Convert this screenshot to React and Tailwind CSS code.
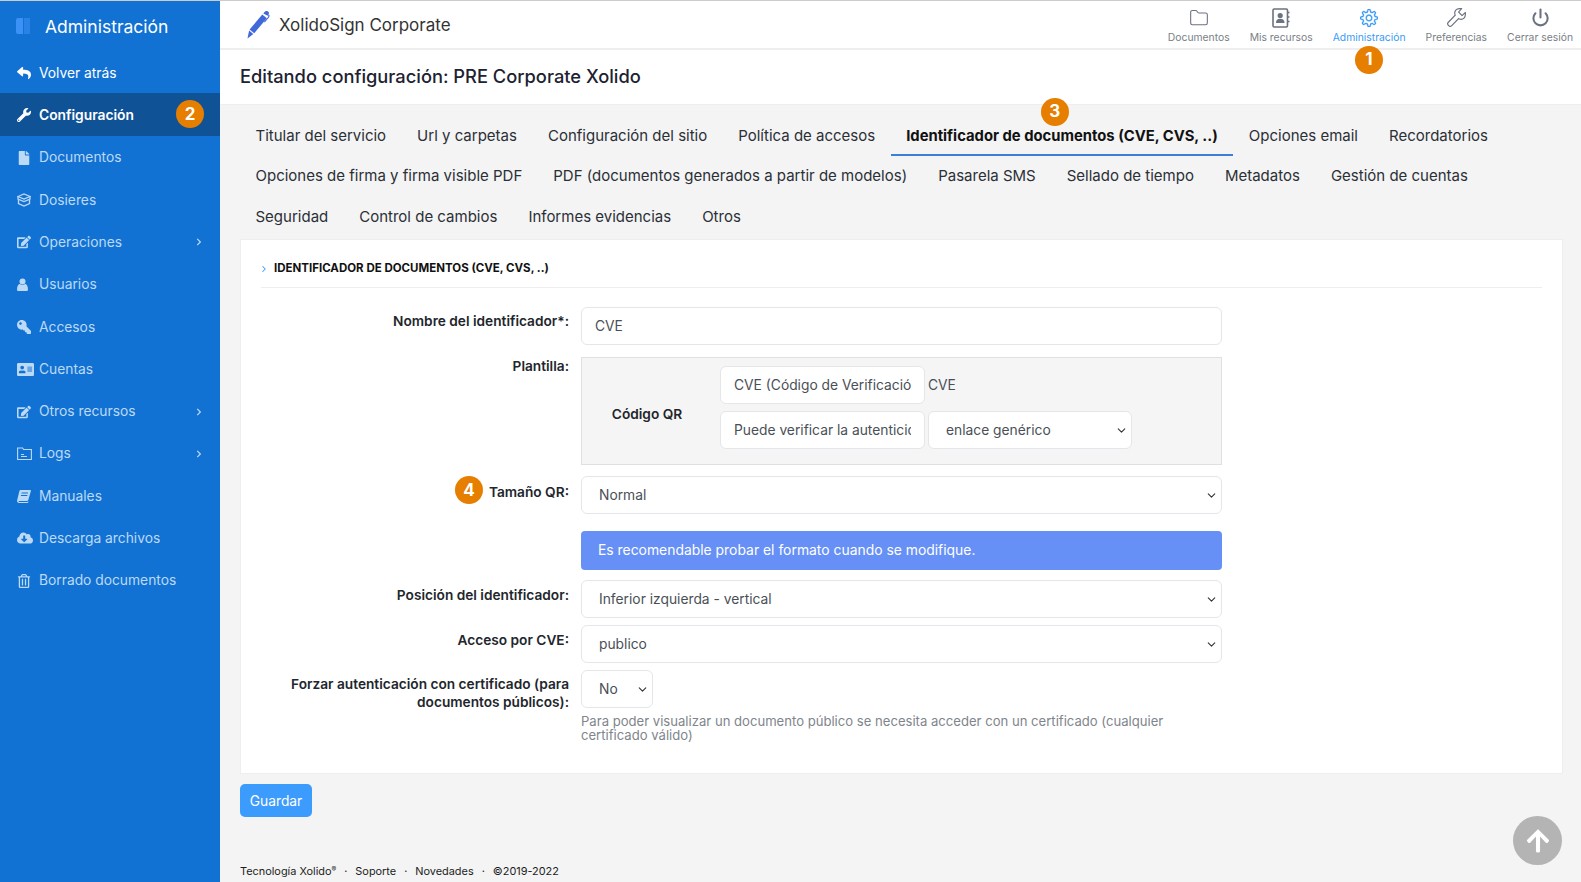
import React from "react";
import { FaReply, FaWrench, FaFile, FaEdit, FaKey, FaAddressCard, FaCloudDownloadAlt, FaRegTrashAlt, FaChevronRight, FaArrowUp } from "react-icons/fa";
import { SlSettings, SlWrench } from "react-icons/sl";
import { ChevronDown, Folder, ChevronRight, Power } from "lucide-react";

const font = { fontFamily: "Inter, 'Open Sans', sans-serif" };

const DosierIcon = () => (
  <svg width="14" height="14" viewBox="0 0 14 14" fill="none" stroke="currentColor" strokeWidth="1.3">
    <path d="M1 3.5 L7 1 L13 3.5 L7 6 Z" />
    <path d="M1 3.5 V6 L7 8.5 L13 6 V3.5" />
    <path d="M1.5 6.5 V10.5 L7 13 L12.5 10.5 V6.5" />
  </svg>
);
const LogsIcon = () => (
  <svg width="15" height="13" viewBox="0 0 15 13" fill="none" stroke="currentColor" strokeWidth="1.1">
    <path d="M.6 1h5l1 1.5h7.8v10H.6Z" />
    <path d="M4 7.500h3M4 9.500h6" />
  </svg>
);
const UserIcon = () => (
  <svg width="11" height="13" viewBox="0 0 11 13" fill="currentColor">
    <circle cx="5.500" cy="3.400" r="3" />
    <path d="M0 11.500C0 8 1.300 6 3 6c.7.600 1.500 1 2.500 1S7.300 6.600 8 6c1.700 0 3 2 3 5.500 0 1-.7 1.500-1.500 1.500h-8C.7 13 0 12.500 0 11.500Z" />
  </svg>
);
const BookIcon = () => (
  <svg width="14" height="13" viewBox="0 0 14 13" fill="currentColor">
    <path d="M3.500 0H13.300c.5 0 .8.400.6.900l-2.600 9c-.2.700-.7 1.100-1.400 1.100H2.200c-.5 0-.8.600-.6 1H10c.6 0 1-.2 1.200-.8l.2.800c-.2.700-.8 1-1.400 1H1.800C.6 13-.2 11.800.1 10.600L2.400.9C2.500.4 3 0 3.500 0Zm1.200 2.500-.3 1h6.400l.3-1Zm-.6 2.500-.3 1h6.400l.3-1Z" />
  </svg>
);
const ContactsIcon = () => (
  <svg width="18" height="20" viewBox="0 0 18 20" fill="none" stroke="#6b7280" strokeWidth="1.6">
    <rect x="1" y="1" width="14.500" height="18" rx="1.200" />
    <path d="M16 4.500h1.500M16 9h1.500M16 13.500h1.500" />
    <circle cx="8.200" cy="7.500" r="2.600" fill="#6b7280" stroke="none" />
    <path d="M4 15c0-3 1.500-4.200 4.200-4.200S12.500 12 12.500 15Z" fill="#6b7280" stroke="none" />
  </svg>
);
const PenIcon = () => (
  <svg width="24" height="28" viewBox="0 0 24 28" fill="#3f68d8">
    <path d="M16.300 3.600 20.800 7.300 8.200 22.300 3.600 18.500Z" />
    <path d="M3.100 19.400 7.300 23 1.500 27.500Z" />
    <path d="M17.300 2.500 18.800.8c.9-1 2.300-1.100 3.300-.3s1.200 2.300.3 3.300L21.800 4.700Z" />
    <path d="M23 3.500c.8.900.8 1.800.1 2.800l-4.300 5.200-.8-.7 4.200-5c.3-.5.300-1-.1-1.500Z" />
  </svg>
);

const side = [
  [<FaReply />, "Volver atrás", false, "white"],
  [<FaWrench />, "Configuración", false, "active"],
  [<FaFile />, "Documentos"],
  [<DosierIcon />, "Dosieres"],
  [<FaEdit />, "Operaciones", true],
  [<UserIcon />, "Usuarios"],
  [<FaKey className="-scale-x-100" />, "Accesos"],
  [<FaAddressCard className="text-[17px]" />, "Cuentas"],
  [<FaEdit />, "Otros recursos", true],
  [<LogsIcon />, "Logs", true],
  [<BookIcon />, "Manuales"],
  [<FaCloudDownloadAlt className="text-[16px]" />, "Descarga archivos"],
  [<FaRegTrashAlt />, "Borrado documentos"],
];

const Badge = ({ n, className }) => (
  <span className={"absolute flex h-[28px] w-[28px] items-center justify-center rounded-full bg-[#e67e00] text-[17px] font-bold text-white " + className}>{n}</span>
);

function Sidebar() {
  return (
    <aside className="relative flex w-[220px] shrink-0 flex-col bg-[#1272d3]">
      <div className="flex h-[50px] items-center pl-[16px] pt-[3px]">
        <span className="mb-[3px] mr-[15px] flex h-[16px] w-[14px] gap-[1px]">
          <span className="w-[7px] rounded-l-[2px] bg-[#3b92f4]" />
          <span className="w-[6px] bg-[#2a82e4]" />
        </span>
        <span className="text-[17.500px] text-white">Administración</span>
      </div>
      <nav className="flex flex-col">
        {side.map(([icon, label, chev, kind]) => (
          <div
            key={label}
            className={
              "relative flex h-[42.300px] items-center pl-[17px] pr-[17px] pt-[2px] text-[13.800px] " +
              (kind === "active" ? "bg-[#0f5296] font-semibold text-white" : kind === "white" ? "text-white" : "text-[#bcd9f6]")
            }
          >
            <span className="flex w-[22px] shrink-0 items-center text-[14px]">{icon}</span>
            <span>{label}</span>
            {chev && <FaChevronRight className="ml-auto text-[8px]" />}
            {kind === "active" && <Badge n="2" className="left-[176px] top-[7px]" />}
          </div>
        ))}
      </nav>
    </aside>
  );
}

const topNav = [
  [<Folder size={20} strokeWidth={1.300} color="#6b7280" />, "Documentos"],
  [<ContactsIcon />, "Mis recursos"],
  [<SlSettings size={18} color="#3b9bf5" className="stroke-[12px]" />, "Administración", true],
  [<SlWrench size={19} color="#6b7280" />, "Preferencias"],
  [<Power size={19} strokeWidth={2.600} color="#6b7280" />, "Cerrar sesión"],
];

function TopBar() {
  return (
    <header className="relative flex h-[49px] items-center border-b-2 border-[#eeeeee] bg-white pl-[26px]">
      <PenIcon />
      <span className="ml-[9px] pt-[2px] text-[17px] text-[#333333]">XolidoSign Corporate</span>
      <div className="ml-auto flex items-center gap-[20px] pr-[8px]">
        {topNav.map(([icon, label, act]) => (
          <div key={label} className="flex flex-col items-center">
            <span className="flex h-[22px] items-center">{icon}</span>
            <span className={"mt-[2px] text-[10.350px] leading-[12px] " + (act ? "text-[#3b9bf5]" : "text-[#7a7f87]")}>{label}</span>
          </div>
        ))}
      </div>
      <Badge n="1" className="left-[1135px] top-[45px] z-10" />
    </header>
  );
}

const tabs = [
  ["Titular del servicio", "Url y carpetas", "Configuración del sitio", "Política de accesos", "Identificador de documentos (CVE, CVS, ..)", "Opciones email", "Recordatorios"],
  ["Opciones de firma y firma visible PDF", "PDF (documentos generados a partir de modelos)", "Pasarela SMS", "Sellado de tiempo", "Metadatos", "Gestión de cuentas"],
  ["Seguridad", "Control de cambios", "Informes evidencias", "Otros"],
];

function Tabs() {
  return (
    <div className="relative flex flex-col">
      {tabs.map((row, i) => (
        <div key={i} className="flex h-[40.700px]">
          {row.map((t) => {
            const active = t.startsWith("Identificador");
            return (
              <div
                key={t}
                className={
                  "flex h-[41px] items-center px-[15.500px] pt-[1px] text-[#2b2f36] " +
                  (active ? "relative border-b-2 border-[#3f7fd8] pt-[3px] text-[14.800px] font-bold text-[#111111]" : "text-[15px]")
                }
              >
                {t}
                {active && <Badge n="3" className="left-[150px] top-[-17px]" />}
              </div>
            );
          })}
        </div>
      ))}
    </div>
  );
}

const ctl = "h-[38px] rounded-[6px] border border-[#e3e6ea] bg-white text-[13.800px] text-[#4a4f57]";

const Select = ({ value, className = "" }) => (
  <div className={ctl + " flex items-center pl-[17px] pr-[3px] " + className}>
    <span>{value}</span>
    <ChevronDown size={13} strokeWidth={2} className="ml-auto text-[#333333]" />
  </div>
);

const Input = ({ value, className = "" }) => (
  <input readOnly value={value} className={ctl + " px-[13px] outline-none " + className} />
);

const Row = ({ label, children, className = "", top = "pt-[6px]", badge }) => (
  <div className={"flex " + className}>
    <div className={"relative w-[308px] shrink-0 text-right text-[13.700px] font-semibold leading-[18px] text-[#22262c] " + top}>
      {label}
      {badge}
    </div>
    <div className="ml-[12px] w-[641px]">{children}</div>
  </div>
);

function Form() {
  return (
    <section className="mt-[2px] h-[535px] border border-[#eeeeee] bg-white px-[20px]">
      <div className="flex h-[48px] items-center border-b border-[#eeeeee] pt-[11px] text-[11.500px] font-bold text-[#111111]">
        <ChevronRight size={10} strokeWidth={2.500} className="-ml-[2px] mr-[5px] text-[#3b9bf5]" />
        IDENTIFICADOR DE DOCUMENTOS (CVE, CVS, ..)
      </div>
      <Row label="Nombre del identificador*:" className="mt-[19px]" top="pt-[5px]">
        <Input value="CVE" className="w-full" />
      </Row>
      <Row label="Plantilla:" className="mt-[12px]" top="pt-0">
        <div className="flex h-[108px] items-start border border-[#dee0e3] bg-[#f5f5f5] pt-[8px]">
          <div className="mt-[38px] w-[138px] pr-[8px] text-center text-[13.700px] font-semibold text-[#22262c]">Código QR</div>
          <div className="flex flex-col gap-[7px]">
            <div className="flex items-center gap-[3px]">
              <Input value="CVE (Código de Verificación)" className="w-[205px]" />
              <span className="text-[13.800px] text-[#4a4f57]">CVE</span>
            </div>
            <div className="flex items-center gap-[3px]">
              <Input value="Puede verificar la autenticidad" className="w-[205px]" />
              <Select value="enlace genérico" className="w-[204px]" />
            </div>
          </div>
        </div>
      </Row>
      <Row
        label="Tamaño QR:"
        className="mt-[11px]"
        top="pt-[7px]"
        badge={<Badge n="4" className="left-[194px] top-0" />}
      >
        <Select value="Normal" />
      </Row>
      <Row label="" className="mt-[17px]">
        <div className="flex h-[39px] items-center rounded-[4px] bg-[#6690f5] pl-[17px] text-[13.900px] text-white">
          Es recomendable probar el formato cuando se modifique.
        </div>
      </Row>
      <Row label="Posición del identificador:" className="mt-[10px]">
        <Select value="Inferior izquierda - vertical" />
      </Row>
      <Row label="Acceso por CVE:" className="mt-[7px]">
        <Select value="publico" />
      </Row>
      <Row label="Forzar autenticación con certificado (para documentos públicos):" className="mt-[7px]" top="pt-[5px]">
        <Select value="No" className="w-[72px]" />
        <p className="mt-[6px] text-[13.100px] leading-[14px] text-[#80858c]">
          Para poder visualizar un documento público se necesita acceder con un certificado (cualquier certificado válido)
        </p>
      </Row>
    </section>
  );
}

export default function App() {
  return (
    <div style={font} className="flex h-[882px] w-[1581px] overflow-hidden border-t border-[#cccccc] bg-[#f4f4f4]">
      <Sidebar />
      <main className="relative flex min-w-0 flex-1 flex-col">
        <TopBar />
        <div className="flex h-[55px] items-center border-b border-[#eeeeee] bg-white pl-[20px] text-[18.300px] font-medium text-[#1c2230]">
          Editando configuración: PRE Corporate Xolido
        </div>
        <div className="flex-1 pl-[20px] pr-[18px] pt-[10px]">
          <Tabs />
          <Form />
          <button className="mt-[10px] h-[33px] w-[72px] rounded-[5px] bg-[#3c9cfd] pt-[1px] text-[13.800px] text-white">Guardar</button>
          <div className="mt-[46px] flex items-center text-[10.900px] text-[#1a1d22]">
            <span>Tecnología Xolido<sup className="text-[7px]">®</sup></span>
            <span className="mx-[8px]">·</span>
            <span>Soporte</span>
            <span className="mx-[8px]">·</span>
            <span>Novedades</span>
            <span className="mx-[8px]">·</span>
            <span>©2019-2022</span>
          </div>
        </div>
        <div className="absolute bottom-[17px] right-[19px] flex h-[49px] w-[49px] items-center justify-center rounded-full bg-[#b4b4b4] text-[26px] text-white">
          <FaArrowUp />
        </div>
      </main>
    </div>
  );
}
